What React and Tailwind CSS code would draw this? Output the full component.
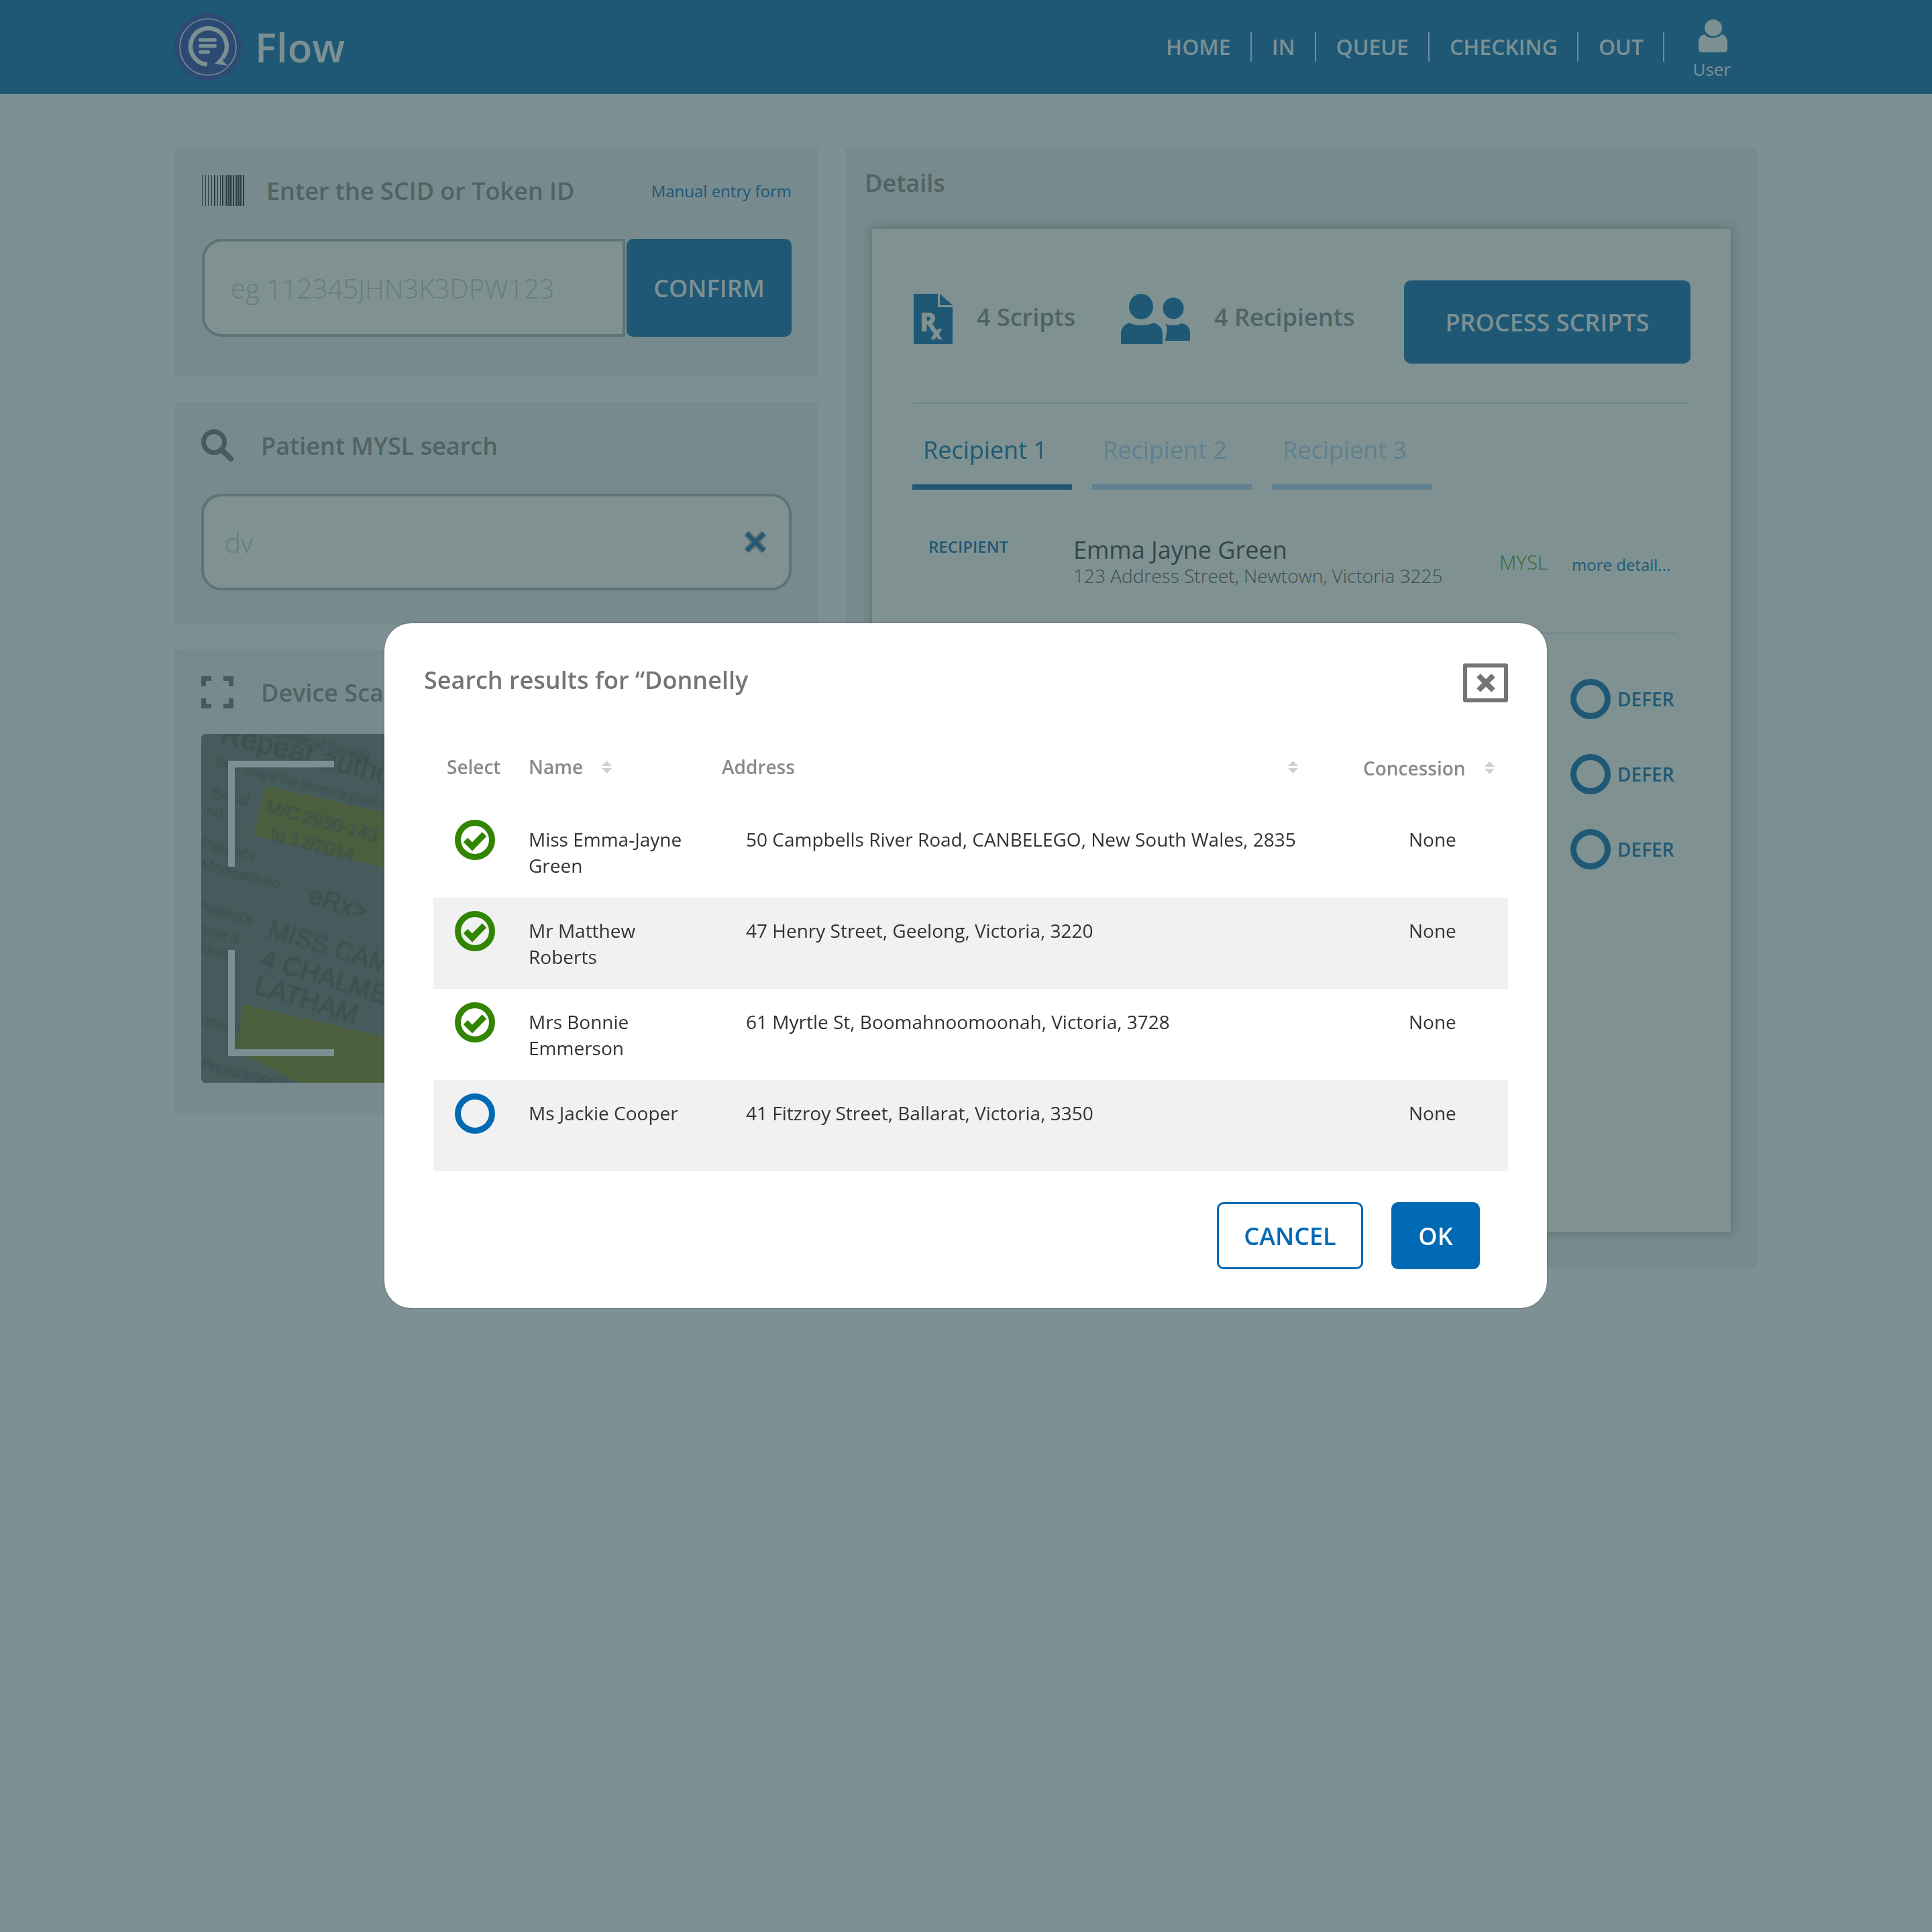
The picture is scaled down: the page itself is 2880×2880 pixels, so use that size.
import React from 'react'

const navItems = ['HOME', 'IN', 'QUEUE', 'CHECKING', 'OUT']

const results = [
  { name: 'Miss Emma-Jayne Green', address: '50 Campbells River Road, CANBELEGO, New South Wales, 2835', checked: true },
  { name: 'Mr Matthew Roberts', address: '47 Henry Street, Geelong, Victoria, 3220', checked: true, shaded: true },
  { name: 'Mrs Bonnie Emmerson', address: '61 Myrtle St, Boomahnoomoonah, Victoria, 3728', checked: true },
  { name: 'Ms Jackie Cooper', address: '41 Fitzroy Street, Ballarat, Victoria, 3350', checked: false, shaded: true }
]

const barWidths = [1, 4, 1, 3, 1, 4, 1, 3, 2, 3, 1, 3, 1, 2, 2, 2, 1, 1, 2, 1, 1, 1, 2, 1, 1, 1, 2, 1, 1, 1, 2, 1, 1, 1, 2, 1, 1, 1, 2, 1, 1]

const Logo = () => (
  <svg className="w-[100px] h-[100px]" viewBox="0 0 100 100">
    <circle cx="50" cy="50" r="50" fill="#2c4a72" />
    <circle cx="50" cy="50" r="42" fill="none" stroke="#7c9093" strokeWidth="1.6" />
    <path d="M49 76 A27 27 0 1 1 72 66" fill="none" stroke="#7c9093" strokeWidth="6.5" />
    <path d="M60 75 L72 62 L73 72 L80 78 Z" fill="#7c9093" />
    <rect x="36" y="37" width="27" height="5" rx="2" fill="#7c9093" />
    <rect x="36" y="46" width="27" height="5" rx="2" fill="#7c9093" />
    <rect x="36" y="55" width="17" height="5" rx="2" fill="#7c9093" />
  </svg>
)

const UserIcon = () => (
  <svg className="w-[43px] h-[49px] ml-[4px]" viewBox="0 0 43 49" fill="#7c9093">
    <ellipse cx="22" cy="12.5" rx="13" ry="12.5" />
    <path d="M9 22 C13 29 30 29 34 22 C39 23 43 27 43 33 L43 44 C43 47 41 49 38 49 L5 49 C2 49 0 47 0 44 L0 33 C0 27 4 23 9 22 Z" />
  </svg>
)

const Barcode = () => (
  <svg className="w-[63px] h-[46px]" viewBox="0 0 63 46" fill="#2a3f40">
    {barWidths.reduce((acc, w, i) => {
      const x = acc.x
      acc.x += w
      if (i % 2 === 0) acc.bars.push(<rect key={i} x={x} y="0" width={w} height="46" />)
      return acc
    }, { x: 0, bars: [] }).bars}
  </svg>
)

const SearchIcon = () => (
  <svg className="w-[48px] h-[48px]" viewBox="0 0 48 48" fill="none" stroke="#465b5c">
    <circle cx="19" cy="19" r="15.5" strokeWidth="7" />
    <path d="M30 30 L44 44" strokeWidth="8" strokeLinecap="round" />
  </svg>
)

const ScanIcon = () => (
  <svg className="w-[48px] h-[48px]" viewBox="0 0 48 48" fill="none" stroke="#465b5c" strokeWidth="7">
    <path d="M3.5 15 V3.5 H15 M33 3.5 H44.5 V15 M44.5 33 V44.5 H33 M15 44.5 H3.5 V33" />
  </svg>
)

const ScriptIcon = () => (
  <svg className="w-[58px] h-[75px]" viewBox="0 0 58 75">
    <path d="M0 0 H36 V20 H58 V73 Q58 75 56 75 H2 Q0 75 0 73 Z" fill="#1e5875" />
    <path d="M39 0 L58 17 H39 Z" fill="#1e5875" />
    <text x="9" y="56" fontFamily="'Open Sans', sans-serif" fontWeight="800" fontSize="38" fill="#7f9291">R</text>
    <text x="25" y="68" fontFamily="'Open Sans', sans-serif" fontWeight="800" fontSize="28" fill="#7f9291">x</text>
  </svg>
)

const PeopleIcon = () => (
  <svg className="w-[103px] h-[75px]" viewBox="0 0 103 75" fill="#1e5875">
    <ellipse cx="78" cy="21.5" rx="15.5" ry="16" />
    <path d="M66 44 C72 48 84 48 90 44 C98 45 103 50 103 58 L103 70 L66 70 C67 60 71 50 66 44 Z" />
    <ellipse cx="30" cy="19" rx="18" ry="19" />
    <path d="M13 43 C19 48 42 48 48 43 C57 45 62 51 62 60 L62 75 L0 75 L0 60 C0 51 5 45 13 43 Z" />
  </svg>
)

const CheckCircle = () => (
  <svg className="w-[60px] h-[60px]" viewBox="0 0 60 60" fill="none">
    <circle cx="30" cy="30" r="25.5" stroke="#318500" strokeWidth="9" />
    <path d="M16 30 L26 40 L44 21.5" stroke="#318500" strokeWidth="9" />
  </svg>
)

const EmptyCircle = ({ color }) => (
  <svg className="w-[60px] h-[60px]" viewBox="0 0 60 60" fill="none">
    <circle cx="30" cy="30" r="25.5" stroke={color} strokeWidth="9" />
  </svg>
)

const SortIcon = () => (
  <svg className="w-[15px] h-[19px]" viewBox="0 0 15 19" fill="#d0d0d0">
    <path d="M7.5 0 L15 8 H0 Z" />
    <path d="M7.5 19 L15 11 H0 Z" />
  </svg>
)

// the photo of the prescription behind the scanner frame
const ScanPhoto = () => (
  <svg className="absolute left-0 top-0 w-[880px] h-[520px]" viewBox="0 0 880 520" fontFamily="'Liberation Sans', sans-serif" fill="#3a4f50">
    <defs>
      <filter id="soft">
        <feGaussianBlur stdDeviation="1.1" />
      </filter>
    </defs>
    <polygon points="97,77 78,151 278,201 278,119" fill="#4b5f3f" />
    <polygon points="63,403 50,472 145,520 278,520 278,453" fill="#4b5f3f" />
    <g filter="url(#soft)">
      <text transform="translate(108 5) rotate(15)" fontSize="22">medical benefit</text>
      <text transform="translate(26 12) rotate(14)" fontSize="44">Repeat authorisation</text>
      <text transform="translate(18 48) rotate(14)" fontSize="19">Valid only if the patient's pharmacist</text>
      <text transform="translate(15 94) rotate(14)" fontSize="22">Serial</text>
      <text transform="translate(7 120) rotate(14)" fontSize="22">no.</text>
      <text transform="translate(95 117) rotate(15)" fontSize="27">M/C 2950-143</text>
      <text transform="translate(102 157) rotate(15)" fontSize="27">to 12/2014</text>
      <text transform="translate(-2 170) rotate(14)" fontSize="22">Patient's</text>
      <text transform="translate(-2 201) rotate(14)" fontSize="22">Medicare no.</text>
      <text transform="translate(-6 264) rotate(14)" fontSize="22">Patient's</text>
      <text transform="translate(-16 295) rotate(14)" fontSize="22">name &amp;</text>
      <text transform="translate(-22 320) rotate(14)" fontSize="22">address</text>
      <text transform="translate(158 251) rotate(18)" fontSize="38">eRx&gt;</text>
      <text transform="translate(97 302) rotate(17)" fontSize="38">MISS CAMERON</text>
      <text transform="translate(87 346) rotate(17)" fontSize="39">4 CHALMERS</text>
      <text transform="translate(77 386) rotate(17)" fontSize="40">LATHAM</text>
      <text transform="translate(-40 423) rotate(14)" fontSize="22">Pharmacy</text>
      <text transform="translate(-2 498) rotate(14)" fontSize="22">Prescription form</text>
    </g>
  </svg>
)

const App = () => {
  return (
    <div className="relative min-h-screen bg-[#7d9093] font-['Open_Sans',sans-serif]">
      {/* Header */}
      <header className="h-[140px] bg-[#1e5875] flex items-center pl-[260px] pr-[300px]">
        <Logo />
        <span className="ml-[20px] text-[60px] font-semibold text-[#7c9093] leading-none">Flow</span>
        <nav className="ml-auto flex items-center">
          {navItems.map((item) => (
            <a key={item} className="h-[44px] flex items-center px-[29.5px] border-r-2 border-[#6f8b96] text-[32px] font-semibold text-[#7c9093]">
              {item}
            </a>
          ))}
          <div className="ml-[42px] mt-[9px] flex flex-col items-center">
            <UserIcon />
            <span className="mt-[8px] text-[26px] leading-[34px] text-[#7c9093]">User</span>
          </div>
        </nav>
      </header>

      <main className="flex gap-[40px] pl-[260px] pr-[261px] pt-[80px]">
        {/* Left column */}
        <div className="w-[960px] shrink-0">
          <section className="h-[340px] rounded-[6px] bg-[#778a8d] pt-[41px] pl-[41px] pr-[40px]">
            <div className="flex items-center h-[46px]">
              <Barcode />
              <h2 className="ml-[33px] mt-[2px] text-[36px] font-semibold text-[#4f6364]">Enter the SCID or Token ID</h2>
              <a className="ml-auto mt-[2px] text-[24px] text-[#1e5875]">Manual entry form</a>
            </div>
            <div className="mt-[49px] flex h-[146px]">
              <div className="w-[631px] rounded-l-[30px] border-4 border-[#5f7275] bg-[#7f9291] flex items-center pl-[39px] pt-[2px] text-[40px] font-light text-[#687c7c]">
                eg 112345JHN3K3DPW123
              </div>
              <button className="ml-[2px] flex-1 rounded-[10px] bg-[#1e5875] pt-[2px] text-[36px] font-semibold text-[#7c9093]">CONFIRM</button>
            </div>
          </section>

          <section className="mt-[40px] h-[330px] rounded-[6px] bg-[#778a8d] pt-[40px] pl-[40px] pr-[40px]">
            <div className="flex items-center h-[48px]">
              <SearchIcon />
              <h2 className="ml-[41px] mt-[2px] text-[36px] font-semibold text-[#4f6364]">Patient MYSL search</h2>
            </div>
            <div className="mt-[48px] h-[144px] rounded-[30px] border-4 border-[#5f7275] bg-[#7f9291] flex items-center justify-between pl-[31px] pr-[33px]">
              <span className="pt-[2px] text-[40px] font-light text-[#687c7c]">dv</span>
              <svg className="w-[34px] h-[34px]" viewBox="0 0 34 34" fill="none">
                <path d="M4 4 L30 30 M30 4 L4 30" stroke="#566a6b" strokeWidth="10" />
                <path d="M4 4 L30 30 M30 4 L4 30" stroke="#1e5875" strokeWidth="5" />
              </svg>
            </div>
          </section>

          <section className="mt-[38px] h-[694px] rounded-[6px] bg-[#778a8d] pt-[40px] pl-[40px] pr-[40px]">
            <div className="flex items-center h-[48px]">
              <ScanIcon />
              <h2 className="ml-[41px] mt-[2px] text-[36px] font-semibold text-[#4f6364]">Device Scanner</h2>
            </div>
            <div className="relative mt-[38px] h-[520px] rounded-[6px] overflow-hidden bg-[#465b5b]">
              <ScanPhoto />
              <div className="absolute left-[40px] top-[40px] w-[158px] h-[158px] border-l-[10px] border-t-[10px] border-[#7c8f92]" />
              <div className="absolute left-[40px] top-[322px] w-[158px] h-[158px] border-l-[10px] border-b-[10px] border-[#7c8f92]" />
            </div>
          </section>
        </div>

        {/* Details */}
        <section className="flex-1 h-[1672px] rounded-[6px] bg-[#778a8d] pl-[40px] pr-[39px] pt-[28px]">
          <h2 className="h-[50px] leading-[50px] ml-[-11px] text-[36px] font-semibold text-[#4f6364]">Details</h2>
          <div className="mt-[43px] h-[1496px] bg-[#7f9291] shadow-[0_0_14px_rgba(50,70,70,0.45)] px-[60px] pt-[77px]">
            <div className="flex items-center">
              <div className="flex items-center h-[75px] mb-[9px]">
                <div className="ml-[2px]"><ScriptIcon /></div>
                <span className="ml-[36px] w-[215px] mb-[5px] text-[36px] font-semibold text-[#4f6364]">4 Scripts</span>
                <PeopleIcon />
                <span className="ml-[36px] mb-[5px] text-[36px] font-semibold text-[#4f6364]">4 Recipients</span>
              </div>
              <button className="ml-auto w-[427px] h-[124px] rounded-[10px] bg-[#1e5875] pt-[2px] text-[36px] font-semibold text-[#7c9093]">PROCESS SCRIPTS</button>
            </div>
            <div className="mt-[58px] h-[2px] bg-[#72868a]" />

            <div className="flex gap-[30px]">
              <div className="w-[238px] h-[128px] border-b-8 border-[#1e5875] pt-[46px] pl-[16px] text-[36px] leading-[46px] text-[#1e5875]">Recipient 1</div>
              <div className="w-[238px] h-[128px] border-b-8 border-[#5f808f] pt-[46px] pl-[16px] text-[36px] leading-[46px] text-[#5f808f]">Recipient 2</div>
              <div className="w-[238px] h-[128px] border-b-8 border-[#5f808f] pt-[46px] pl-[16px] text-[36px] leading-[46px] text-[#5f808f]">Recipient 3</div>
            </div>

            <div className="mt-[66px] flex pl-[24px]">
              <span className="w-[216px] mt-[3px] text-[24px] leading-[32px] font-semibold text-[#1e5875]">RECIPIENT</span>
              <div className="w-[635px]">
                <div className="text-[36px] leading-[48px] text-[#34464a]">Emma Jayne Green</div>
                <div className="mt-[-5px] text-[28px] leading-[38px] font-light text-[#3c4e4f]">123 Address Street, Newtown, Victoria 3225</div>
              </div>
              <span className="w-[108px] mt-[23px] text-[29.4px] leading-[38px] font-light text-[#2f6a30]">MYSL</span>
              <span className="mt-[28px] text-[24px] leading-[36px] text-[#1e5875]">more detail...</span>
            </div>
            <div className="mt-[66px] mr-[20px] h-[2px] bg-[#72868a]" />

            <div className="mt-[67px] flex flex-col gap-[52px]">
              {[0, 1, 2].map((i) => (
                <div key={i} className="flex justify-end items-center pr-[20px]">
                  <EmptyCircle color="#1e5875" />
                  <span className="ml-[10px] w-[89px] text-[28px] font-semibold text-[#1e5875]">DEFER</span>
                </div>
              ))}
            </div>
          </div>
        </section>
      </main>

      {/* Search results dialog */}
      <div className="absolute left-[573px] top-[929px] w-[1733px] h-[1021px] rounded-[40px] bg-white shadow-[0_0_2px_rgba(60,60,60,0.8)] pt-[60px]">
        <div className="flex items-start pl-[59px] pr-[58px]">
          <h3 className="text-[36px] leading-[50px] font-semibold text-[#757575]">Search results for “Donnelly</h3>
          <button className="ml-auto w-[67px] h-[58px] rounded-[3px] border-[6px] border-[#757575] flex items-center justify-center">
            <svg className="w-[30px] h-[30px]" viewBox="0 0 30 30">
              <path d="M4 4 L26 26 M26 4 L4 26" stroke="#757575" strokeWidth="8" />
            </svg>
          </button>
        </div>

        <div className="ml-[73px] mr-[58px]">
          <div className="mt-[76px] h-[40px] flex items-center text-[28px] font-semibold text-[#8a8a8a]">
            <span className="ml-[20px] w-[122px]">Select</span>
            <span className="w-[109px]">Name</span>
            <SortIcon />
            <span className="ml-[164px] w-[844px]">Address</span>
            <SortIcon />
            <span className="ml-[97px] w-[181px] mt-[3px]">Concession</span>
            <div className="mt-[3px]"><SortIcon /></div>
          </div>

          <div className="mt-[39px]">
            {results.map((row) => (
              <div key={row.name} className={`grid grid-cols-[142px_324px_988px_1fr] h-[136px] ${row.shaded ? 'bg-[#f1f1f1]' : 'bg-white'}`}>
                <div className="pl-[32px] pt-[20px]">
                  {row.checked ? <CheckCircle /> : <EmptyCircle color="#0069b4" />}
                </div>
                <div className="pt-[30px] pr-[60px] text-[28px] leading-[39px] text-[#333333]">{row.name}</div>
                <div className="pt-[30px] text-[28px] leading-[39px] text-[#333333]">{row.address}</div>
                <div className="pt-[30px] text-[28px] leading-[39px] text-[#333333]">None</div>
              </div>
            ))}
          </div>
        </div>

        <div className="mt-[46px] flex justify-end gap-[42px] pr-[100px]">
          <button className="w-[218px] h-[100px] rounded-[10px] border-[3px] border-[#0069b4] bg-white pt-[2px] text-[36px] font-semibold text-[#0069b4]">CANCEL</button>
          <button className="w-[132px] h-[100px] rounded-[10px] bg-[#0069b4] pt-[2px] text-[36px] font-semibold text-white">OK</button>
        </div>
      </div>
    </div>
  )
}

export default App
